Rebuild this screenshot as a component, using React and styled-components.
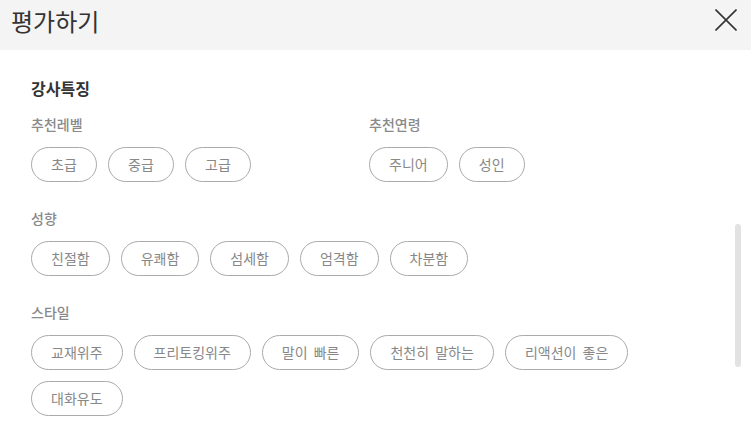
import React from "react";
import styled, { createGlobalStyle } from "styled-components";

const Global = createGlobalStyle`
  html, body { margin: 0; padding: 0; background: #fff; }
  body { font-family: "Noto Sans CJK KR", "Noto Sans", sans-serif; }
  * { box-sizing: border-box; }
`;

const Modal = styled.div`
  position: relative;
  width: 751px;
  height: 425px;
  overflow: hidden;
  background: #fff;
`;

const Header = styled.header`
  display: flex;
  align-items: flex-start;
  justify-content: space-between;
  height: 50px;
  background: #f4f4f4;
  padding: 0 14px 0 11px;
`;

const Title = styled.h1`
  margin: 0;
  font-size: 24px;
  font-weight: 400;
  line-height: 41px;
  color: #333;
`;

const CloseButton = styled.button`
  margin-top: 9px;
  width: 22px;
  height: 22px;
  padding: 0;
  border: 0;
  background: none;
  cursor: pointer;
  display: block;
`;

const Body = styled.div`
  padding: 28px 31px 0;
  display: flex;
  flex-direction: column;
`;

const SectionTitle = styled.h2`
  margin: 0 0 16px;
  font-size: 16px;
  font-weight: 700;
  line-height: 20px;
  color: #333;
`;

const Groups = styled.div`
  display: flex;
  flex-direction: column;
  gap: 26px;
`;

const Columns = styled.div`
  display: grid;
  grid-template-columns: 338px 1fr;
`;

const Group = styled.div`
  display: flex;
  flex-direction: column;
  gap: 13px;
`;

const Label = styled.div`
  font-size: 14px;
  font-weight: 500;
  line-height: 20px;
  color: #8a8a8a;
`;

const Chips = styled.div`
  display: flex;
  flex-wrap: wrap;
  gap: 11px;
  max-width: 620px;
`;

const Chip = styled.button`
  height: 35px;
  min-width: 66px;
  padding: 0 19px;
  border: 1px solid #aaaaaa;
  border-radius: 18px;
  background: #fff;
  font-family: inherit;
  font-size: 14px;
  line-height: 33px;
  word-spacing: 3px;
  color: #888;
  white-space: nowrap;
  cursor: pointer;
`;

const ScrollThumb = styled.div`
  position: absolute;
  left: 735px;
  top: 224px;
  width: 6px;
  height: 143px;
  border-radius: 3px;
  background: #e2e2e2;
`;

const ChipGroup = ({ label, items }) => (
  <Group>
    <Label>{label}</Label>
    <Chips>
      {items.map((t) => (
        <Chip key={t}>{t}</Chip>
      ))}
    </Chips>
  </Group>
);

export default function App() {
  return (
    <Modal>
      <Global />
      <Header>
        <Title>평가하기</Title>
        <CloseButton aria-label="닫기">
          <svg width="22" height="22" viewBox="0 0 22 22">
            <path d="M0.5 0.5 L21.5 21.5 M21.5 0.5 L0.5 21.5" stroke="#333" strokeWidth="1.6" fill="none" />
          </svg>
        </CloseButton>
      </Header>
      <Body>
        <SectionTitle>강사특징</SectionTitle>
        <Groups>
          <Columns>
            <ChipGroup label="추천레벨" items={["초급", "중급", "고급"]} />
            <ChipGroup label="추천연령" items={["주니어", "성인"]} />
          </Columns>
          <ChipGroup label="성향" items={["친절함", "유쾌함", "섬세함", "엄격함", "차분함"]} />
          <ChipGroup
            label="스타일"
            items={["교재위주", "프리토킹위주", "말이 빠른", "천천히 말하는", "리액션이 좋은", "대화유도"]}
          />
        </Groups>
      </Body>
      <ScrollThumb />
    </Modal>
  );
}
